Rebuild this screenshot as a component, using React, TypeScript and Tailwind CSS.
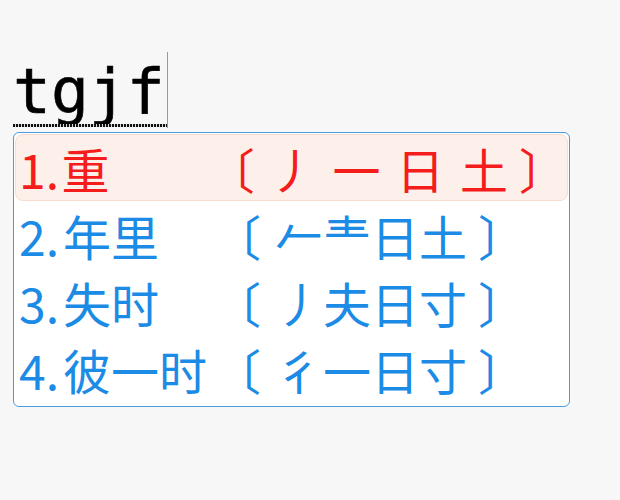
const candidates = [
  { index: '1.', text: '重', open: '〔', code: '丿 一 日 土', close: '〕' },
  { index: '2.', text: '年里', open: '〔', code: '𠂉龶日土', close: '〕' },
  { index: '3.', text: '失时', open: '〔', code: '丿夫日寸', close: '〕' },
  { index: '4.', text: '彼一时', open: '〔', code: '彳一日寸', close: '〕' },
]

const cjk = { fontFamily: '"Noto Sans CJK SC", "Noto Sans", sans-serif' }
const mono = { fontFamily: '"DejaVu Sans Mono", "Liberation Mono", monospace' }

const App = () => {
  return (
    <div className="min-h-[500px] w-[620px] bg-[#f7f7f7] pl-[13px] pt-[52px]">
      <div className="relative flex h-[76px] w-fit items-end">
        <span className="pb-[1px] text-[63px] leading-[70px] text-black [-webkit-text-stroke:0.6px_#000]" style={mono}>tgjf</span>
        <span className="ml-[2px] h-full w-px bg-[#9a9a9a]" />
        <div className="absolute bottom-[1px] left-0 right-[1px] h-[3px] bg-[repeating-linear-gradient(90deg,#111_0_2px,#d8d8d8_2px_3px)]" />
      </div>
      <div className="mt-[4px] w-[557px] rounded-[6px] border border-[#4a9ce0] bg-white px-px pb-[4px] pt-px" style={cjk}>
        {candidates.map((c, i) => {
          const active = i === 0
          return (
            <div
              key={c.index}
              className={
                active
                  ? 'flex h-[67px] items-center rounded-[8px] border border-[#f8dccf] bg-[#fdf0eb] pl-[3px] text-[48px] text-[#f51c1c]'
                  : 'flex h-[67px] items-center rounded-[8px] border border-transparent pl-[3px] text-[48px] text-[#1b8be6]'
              }
            >
              <span className="w-[44px] leading-none">{c.index}</span>
              <span className="w-[150px] leading-none">{c.text}</span>
              <span className="leading-none">{c.open}</span>
              <span className={active ? 'ml-[14px] whitespace-pre leading-none [word-spacing:5px]' : 'ml-[14px] whitespace-pre leading-none'}>{c.code}</span>
              <span className="ml-[11px] leading-none">{c.close}</span>
            </div>
          )
        })}
      </div>
    </div>
  )
}

export default App
